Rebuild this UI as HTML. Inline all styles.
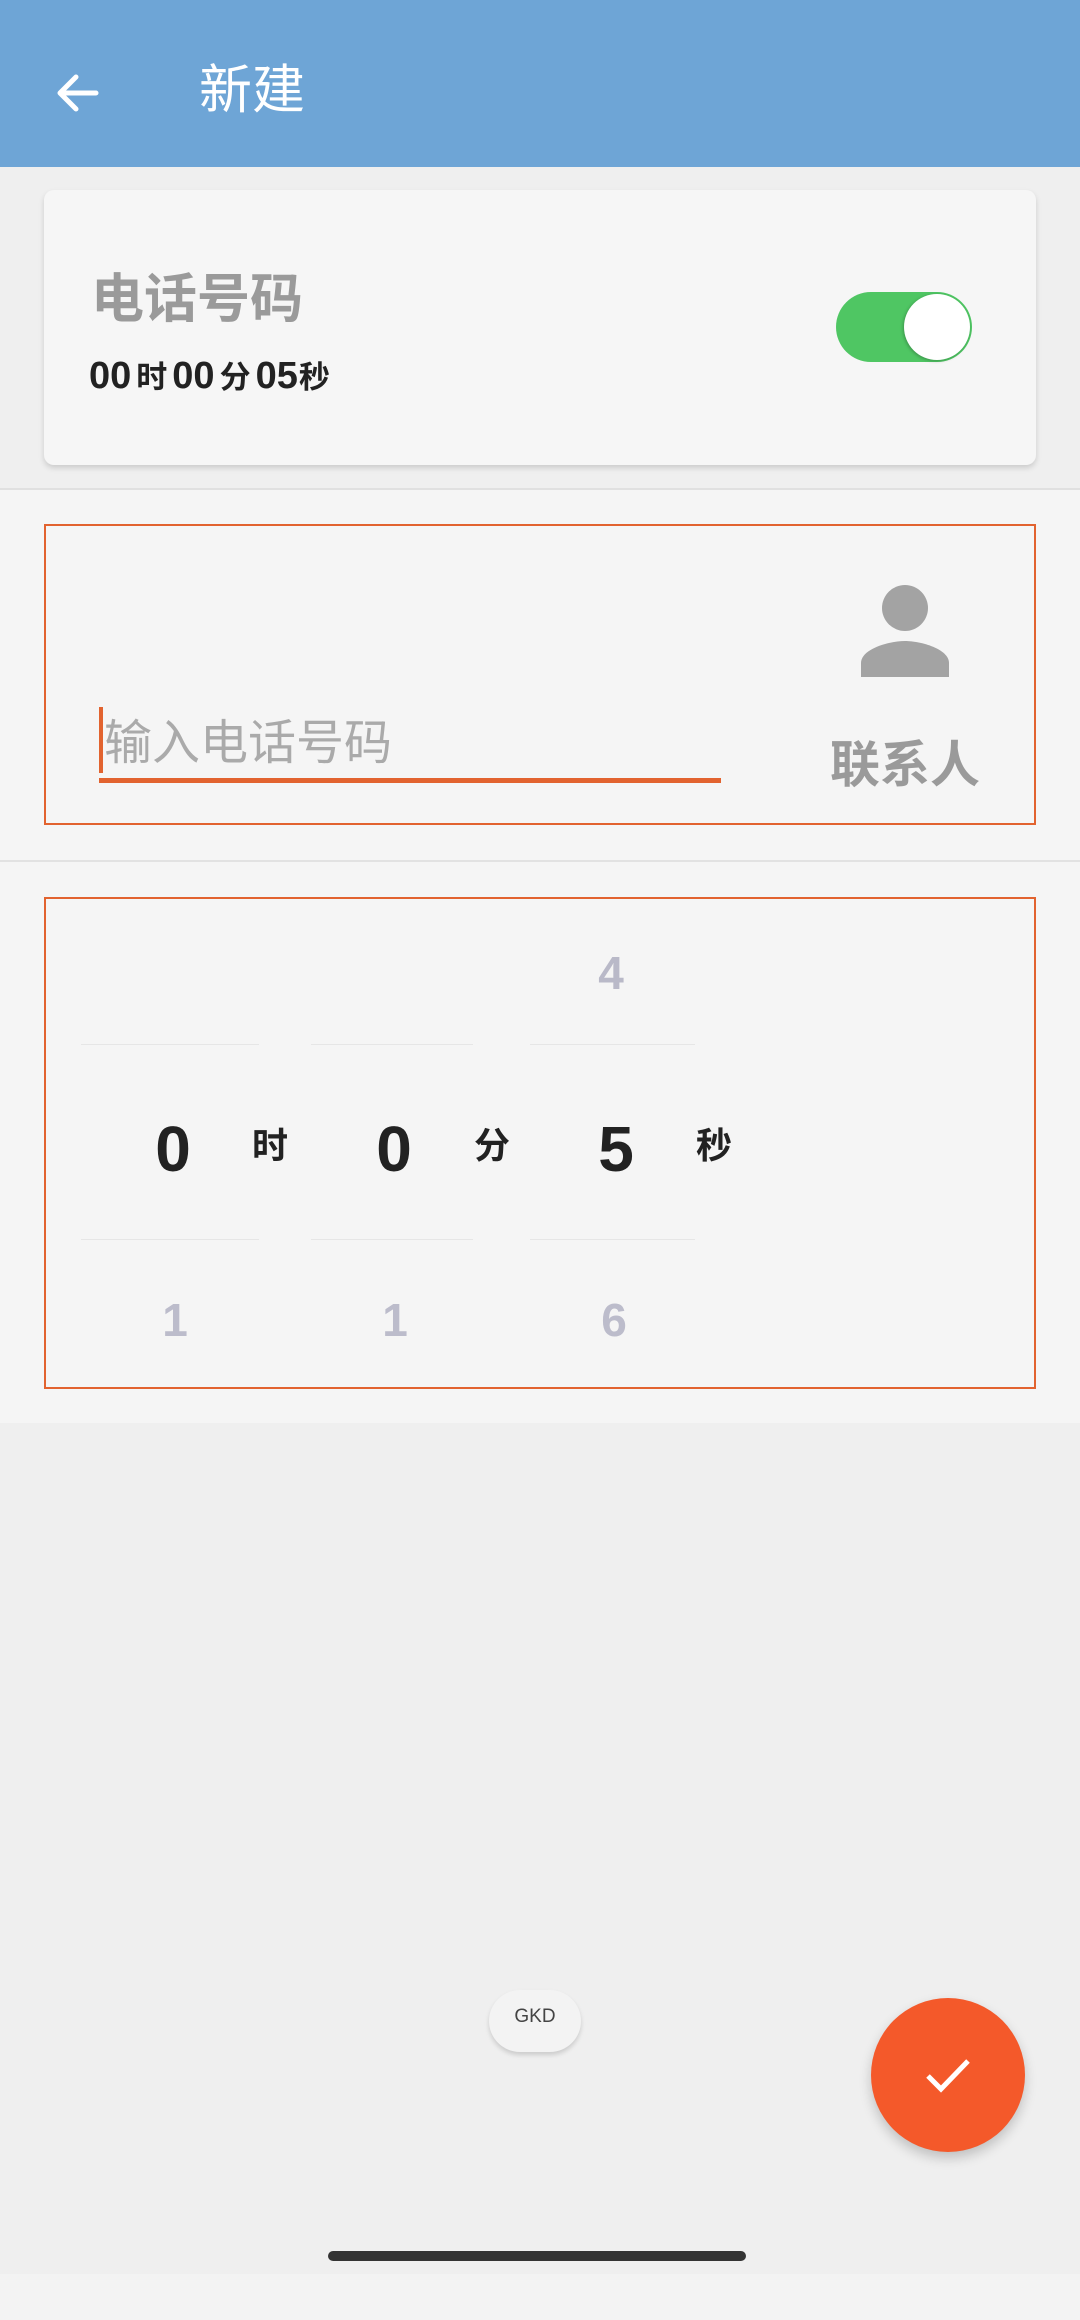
<!DOCTYPE html>
<html><head><meta charset="utf-8"><style>
*{margin:0;padding:0;box-sizing:border-box}
body{width:1080px;height:2320px;background:#efefef;position:relative;overflow:hidden;font-family:"Liberation Sans","Noto Sans CJK SC",sans-serif}
.a{position:absolute}
.c{font-size:31px;margin:0 5px}
</style></head><body>
<div class="a" style="left:0;top:0;width:1080px;height:167px;background:#6ea5d6;box-shadow:0 2px 4px rgba(0,0,0,.15)"></div>
<svg class="a" style="left:52px;top:68px" width="50" height="50" viewBox="0 0 50 50"><path d="M44 25H8M24 9L8 25l16 16" stroke="#fff" stroke-width="5" fill="none" stroke-linecap="round" stroke-linejoin="round"/></svg>
<div class="a" style="left:199px;top:60px;font-size:53px;color:#fff;line-height:62px">新建</div>
<div class="a" style="left:0;top:167px;width:1080px;height:322px;background:#efefef"></div>
<div class="a" style="left:44px;top:190px;width:992px;height:275px;background:#f6f6f6;border-radius:10px;box-shadow:0 3px 6px rgba(0,0,0,.15)"></div>
<div class="a" style="left:91px;top:270px;font-size:53px;color:#9a9a9a;font-weight:bold;line-height:60px">电话号码</div>
<div class="a" style="left:89px;top:354px;font-size:38px;color:#222;font-weight:bold;line-height:44px">00<span class="c">时</span>00<span class="c">分</span>05<span class="c" style="margin-left:1px">秒</span></div>
<div class="a" style="left:836px;top:292px;width:136px;height:70px;border-radius:35px;background:#4fc663"></div>
<div class="a" style="left:904px;top:294px;width:66px;height:66px;border-radius:50%;background:#fff;box-shadow:-1px 1px 3px rgba(0,0,0,.25)"></div>
<div class="a" style="left:0;top:488px;width:1080px;height:2px;background:#e0e0e0"></div>
<div class="a" style="left:0;top:490px;width:1080px;height:933px;background:#f5f5f5"></div>
<div class="a" style="left:0;top:860px;width:1080px;height:2px;background:#e2e2e2"></div>
<div class="a" style="left:44px;top:524px;width:992px;height:301px;border:2px solid #e2632f"></div>
<div class="a" style="left:99px;top:707px;width:4px;height:66px;background:#e2632f"></div>
<div class="a" style="left:104px;top:714px;font-size:48px;color:#aaa;line-height:60px">输入电话号码</div>
<div class="a" style="left:99px;top:778px;width:622px;height:5px;background:#e2632f"></div>
<svg class="a" style="left:860px;top:585px" width="90" height="92" viewBox="0 0 90 92"><circle cx="45" cy="23" r="23" fill="#a3a3a3"/><path d="M1 92v-14c0-14 28-22 44-22s44 8 44 22v14z" fill="#a3a3a3"/></svg>
<div class="a" style="left:830px;top:736px;font-size:50px;color:#9a9a9a;font-weight:bold;line-height:58px">联系人</div>
<div class="a" style="left:44px;top:897px;width:992px;height:492px;border:2px solid #e2632f"></div>
<div class="a" style="left:81px;top:1044px;width:178px;height:1px;background:#e6e6e6"></div>
<div class="a" style="left:311px;top:1044px;width:162px;height:1px;background:#e6e6e6"></div>
<div class="a" style="left:530px;top:1044px;width:165px;height:1px;background:#e6e6e6"></div>
<div class="a" style="left:81px;top:1239px;width:178px;height:1px;background:#e6e6e6"></div>
<div class="a" style="left:311px;top:1239px;width:162px;height:1px;background:#e6e6e6"></div>
<div class="a" style="left:530px;top:1239px;width:165px;height:1px;background:#e6e6e6"></div>
<div class="a" style="left:581px;top:945px;width:60px;text-align:center;font-size:46px;font-weight:bold;color:#b9b9c8;line-height:56px">4</div>
<div class="a" style="left:133px;top:1112px;width:80px;text-align:center;font-size:64px;font-weight:bold;color:#222;line-height:74px">0</div>
<div class="a" style="left:252px;top:1126px;font-size:36px;font-weight:bold;color:#222;line-height:40px">时</div>
<div class="a" style="left:354px;top:1112px;width:80px;text-align:center;font-size:64px;font-weight:bold;color:#222;line-height:74px">0</div>
<div class="a" style="left:474px;top:1126px;font-size:36px;font-weight:bold;color:#222;line-height:40px">分</div>
<div class="a" style="left:576px;top:1112px;width:80px;text-align:center;font-size:64px;font-weight:bold;color:#222;line-height:74px">5</div>
<div class="a" style="left:696px;top:1126px;font-size:36px;font-weight:bold;color:#222;line-height:40px">秒</div>
<div class="a" style="left:145px;top:1292px;width:60px;text-align:center;font-size:46px;font-weight:bold;color:#bcbccb;line-height:56px">1</div>
<div class="a" style="left:365px;top:1292px;width:60px;text-align:center;font-size:46px;font-weight:bold;color:#bcbccb;line-height:56px">1</div>
<div class="a" style="left:584px;top:1292px;width:60px;text-align:center;font-size:46px;font-weight:bold;color:#bcbccb;line-height:56px">6</div>
<div class="a" style="left:489px;top:1990px;width:92px;height:62px;border-radius:31px;background:#f3f3f3;box-shadow:0 3px 5px rgba(0,0,0,.15)"></div>
<div class="a" style="left:489px;top:2004px;width:92px;text-align:center;font-size:19px;color:#444;line-height:26px">GKD</div>
<div class="a" style="left:871px;top:1998px;width:154px;height:154px;border-radius:50%;background:#f4592a;box-shadow:0 6px 12px rgba(0,0,0,.2)"></div>
<svg class="a" style="left:922px;top:2049px" width="52" height="52" viewBox="0 0 52 52"><path d="M6 27l13 13L46 12" stroke="#fff" stroke-width="5" fill="none"/></svg>
<div class="a" style="left:0;top:2274px;width:1080px;height:46px;background:#f3f3f3"></div>
<div class="a" style="left:328px;top:2251px;width:418px;height:10px;border-radius:5px;background:#333"></div>
</body></html>
